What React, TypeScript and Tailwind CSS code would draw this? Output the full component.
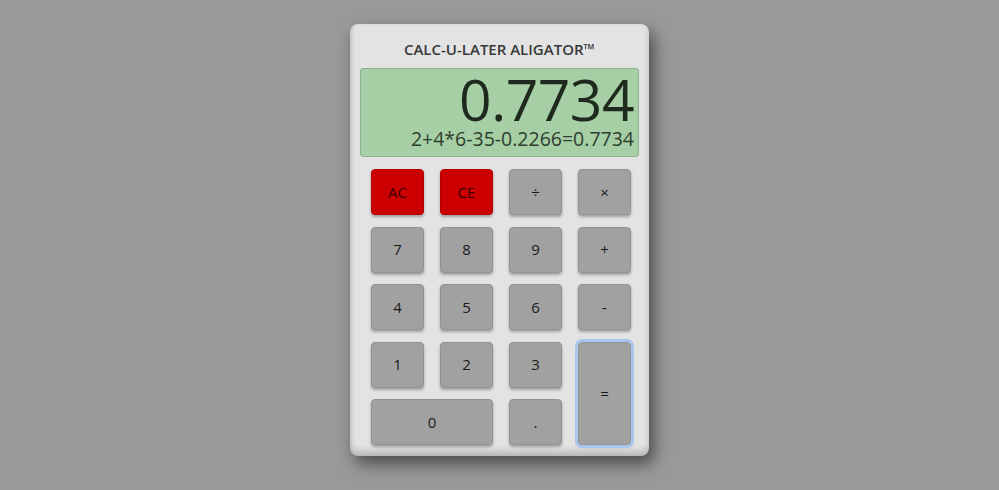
const keys: { label: string; red?: boolean; cls?: string }[] = [
  { label: "AC", red: true },
  { label: "CE", red: true },
  { label: "÷" },
  { label: "×" },
  { label: "7" },
  { label: "8" },
  { label: "9" },
  { label: "+" },
  { label: "4" },
  { label: "5" },
  { label: "6" },
  { label: "-" },
  { label: "1" },
  { label: "2" },
  { label: "3" },
  { label: "=", cls: "row-span-2 outline-[3px] outline-solid outline-[#a9c7ec] outline-offset-0" },
  { label: "0", cls: "col-span-2" },
  { label: "." },
];

export default function App() {
  return (
    <div
      className="min-h-screen bg-[#999999] pt-[24px]"
      style={{ fontFamily: '"Open Sans", "Noto Sans", sans-serif' }}
    >
      <div className="mx-auto w-[299px] rounded-[8px] bg-[#e3e3e3] pb-[11px] shadow-[inset_0_-5px_6px_rgba(0,0,0,0.18),inset_2px_0_3px_rgba(0,0,0,0.06),5px_8px_16px_rgba(0,0,0,0.5)]">
        {/* Title */}
        <div className="pt-[14px] pb-[8px] text-center text-[15px] leading-[22px] font-semibold text-[#383838]">
          CALC-U-LATER ALIGATOR™
        </div>

        {/* Display */}
        <div className="mx-[10px] flex h-[89px] flex-col items-end rounded-[3px] border border-[#8fb08f] bg-[#a6cfa6] pr-[4px] text-[#1f2a1f]">
          <div className="mt-[1px] text-[57px] leading-[58px] tracking-[-0.5px]">0.7734</div>
          <div className="text-[19.5px] leading-[22px] text-[#2e3e2e]">2+4*6-35-0.2266=0.7734</div>
        </div>

        {/* Keys */}
        <div className="mt-[12px] grid grid-cols-[53px_53px_53px_53px] auto-rows-[46px] gap-x-[16px] gap-y-[11.5px] pl-[21px]">
          {keys.map((k) => (
            <button
              key={k.label}
              className={
                "flex items-center justify-center rounded-[4px] border text-[15px] shadow-[0_2px_3px_rgba(0,0,0,0.3)] " +
                (k.red ? "border-[#b30000] bg-[#cc0000] text-[#3a0000] " : "border-[#939393] bg-[#a1a1a1] text-[#1a1a1a] ") +
                (k.cls ?? "")
              }
            >
              {k.label}
            </button>
          ))}
        </div>
      </div>
    </div>
  );
}
